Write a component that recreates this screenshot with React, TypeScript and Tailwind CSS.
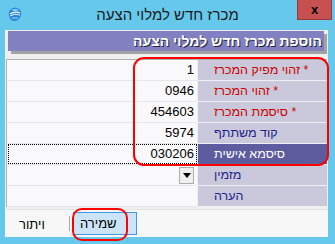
import React from 'react';

type Row = { label: string; value: string; required?: boolean; selected?: boolean; combo?: boolean };

const rows: Row[] = [
  { label: 'זהוי מפיק המכרז', value: '1', required: true },
  { label: 'זהוי המכרז', value: '0946', required: true },
  { label: 'סיסמת המכרז', value: '454603', required: true },
  { label: 'קוד משתתף', value: '5974' },
  { label: 'סיסמא אישית', value: '030206', selected: true },
  { label: 'מזמין', value: '', combo: true },
  { label: 'הערה', value: '' },
];

function AppIcon() {
  return (
    <svg width="14" height="15" viewBox="0 0 14 15">
      <path d="M3 2 Q7 -1 11 2 Q14 4 13 8 Q12 13 7 14 Q2 14 1 9 Q0 4 3 2 Z" fill="#2a86d6" />
      <path d="M3 3 Q7 1 11 3 Q9 4 7 4 Q5 4 3 3 Z" fill="#8fd0f4" />
      <path d="M2 7 Q7 4 12 6" stroke="#fff" strokeWidth="1.2" fill="none" />
      <path d="M2 9 Q7 6 12 8" stroke="#e8f4fc" strokeWidth="1" fill="none" />
      <path d="M5 10 L5 12 M7 10 L7 12 M9 10 L9 12" stroke="#d0e8f8" strokeWidth="0.8" />
    </svg>
  );
}

export default function App() {
  return (
    <div className="relative w-[335px] h-[244px] bg-[#66c9ec] overflow-hidden font-['Liberation_Sans',Arial,sans-serif]">
      {/* title bar */}
      <div className="flex h-[30px]">
        <div className="w-[38px] pl-[8px] pt-[7px]">
          <AppIcon />
        </div>
        <div dir="rtl" className="flex-1 text-center text-[15px] leading-[30px] text-[#1b1b1b]">
          מכרז חדש למלוי הצעה
        </div>
        <div className="w-[38px]">
          <div className="w-[35px] h-[20px] bg-[#c75050] border border-t-0 border-[#9c3a3a] flex items-center justify-center text-[13px] font-bold leading-none text-black">
            x
          </div>
        </div>
      </div>

      {/* client area */}
      <div className="ml-[5px] w-[323px] h-[207px] bg-[#f0f0f0] flex flex-col">
        <div className="pt-[1px] pl-[3px]">
          <div
            dir="rtl"
            className="w-[316px] h-[20px] bg-[#8181c1] shadow-[3px_3px_0_#a3a3a3] pr-[2px] text-right text-[14px] font-bold leading-[20px] text-white [text-shadow:1px_1px_0_#1f1f3a]"
          >
            הוספת מכרז חדש למלוי הצעה
          </div>
        </div>

        <div className="mt-[8px] ml-[1px] w-[321px] border-l border-t border-[#b0b0b0] bg-[#f9f9fb]">
          {rows.map((r) => (
            <div key={r.label} className="flex h-[21px]">
              <div
                className={
                  r.selected
                    ? 'w-[190px] h-[21px] border-b border-[#e6e6ea] pl-[1px]'
                    : 'w-[190px] h-[21px] border-b border-[#e6e6ea] flex items-center justify-end pr-[3px]'
                }
              >
                {r.selected ? (
                  <div className="h-[20px] border border-dotted border-black flex items-center justify-end pr-[2px] text-[13px] text-black">
                    {r.value}
                  </div>
                ) : r.combo ? (
                  <div className="w-[15px] h-[17px] bg-[#f0f0f0] border border-[#adadad] flex items-center justify-center">
                    <svg width="8" height="5" viewBox="0 0 8 5">
                      <path d="M0 0 H8 L4 5 Z" fill="#000" />
                    </svg>
                  </div>
                ) : (
                  <span className="text-[13px] text-black">{r.value}</span>
                )}
              </div>
              <div
                dir="rtl"
                className={
                  'w-[130px] h-[21px] border-b border-l border-[#eeeef4] flex items-center justify-end pl-[16px] text-[12.5px] whitespace-nowrap ' +
                  (r.selected
                    ? 'bg-[#5c5c9f] text-white'
                    : r.required
                      ? 'bg-[#c9c9db] text-[#cc0000]'
                      : 'bg-[#c9c9db] text-[#1e1e8e]')
                }
              >
                <span>
                  {r.required ? '* ' : ''}
                  {r.label}
                </span>
              </div>
            </div>
          ))}
        </div>

        <div className="mt-[2px] h-[28px] bg-[#f7f7f7] border-t border-[#e4e4e4] flex items-start">
          <div dir="rtl" className="w-[64px] pl-[14px] pt-[5px] text-left text-[13px] text-black">
            ויתור
          </div>
          <div className="mt-[6px] w-px h-[15px] bg-[#a8a8a8]" />
          <div
            dir="rtl"
            className="ml-[3px] mt-[2px] w-[64px] h-[23px] bg-[#cce4f7] border border-[#3d9ae8] pl-[6px] text-left text-[13px] leading-[21px] text-black"
          >
            שמירה
          </div>
        </div>
      </div>

      {/* red annotation marks */}
      <div className="absolute left-[133px] top-[57px] w-[196px] h-[109px] border-[2.5px] border-[#ff0000] rounded-[11px]" />
      <div className="absolute left-[72px] top-[208px] w-[56px] h-[33px] border-[2.5px] border-[#ff0000] rounded-[10px]" />
    </div>
  );
}
